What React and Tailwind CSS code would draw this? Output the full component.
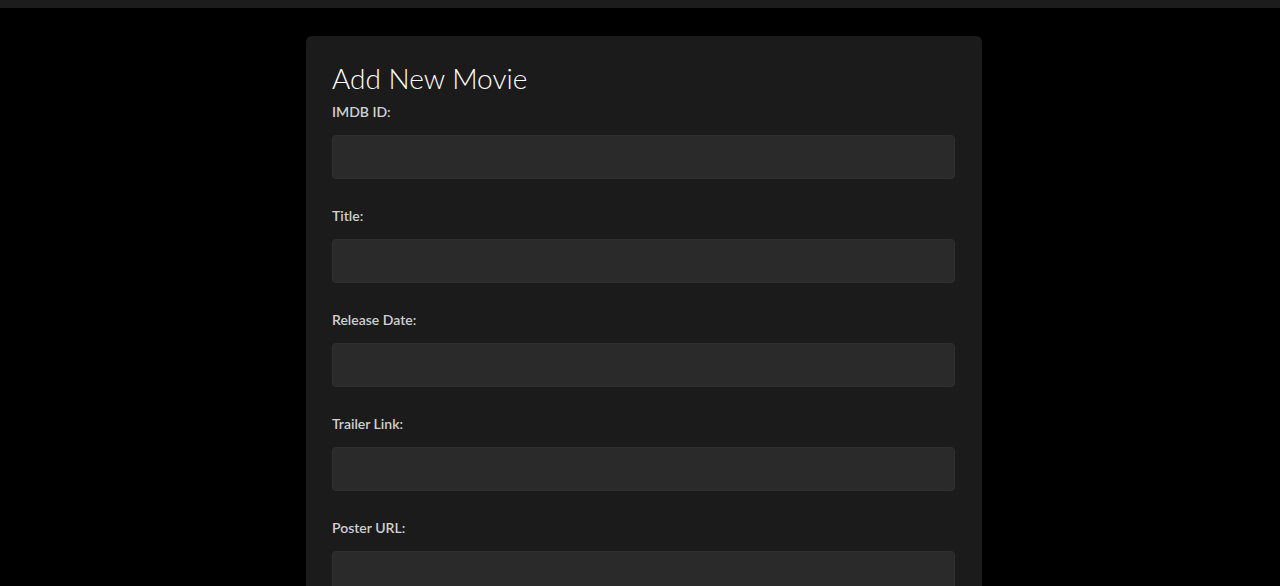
import React from "react";

const fields = ["IMDB ID:", "Title:", "Release Date:", "Trailer Link:", "Poster URL:"];

const App = () => {
  return (
    <div className="min-h-screen bg-black" style={{ fontFamily: "Lato, 'Noto Sans', sans-serif" }}>
      <div className="h-2 bg-[#1c1c1c]" />

      <div className="flex justify-center pt-7 pl-2">
        <form className="w-[676px] bg-[#1b1b1b] rounded-md pl-[26px] pr-[27px] pt-6 pb-6">
          <h2 className="text-[28px] leading-9 font-light text-white mb-1.5">Add New Movie</h2>

          {fields.map((f) => (
            <div key={f} className="mb-[27px]">
              <label className="block text-sm leading-5 font-semibold text-[#d0d0d0] mb-[13px]">{f}</label>
              <input
                type="text"
                className="block w-full h-11 rounded bg-[#2a2a2a] border border-[#303030] text-white px-3 outline-none"
              />
            </div>
          ))}
        </form>
      </div>
    </div>
  );
};

export default App;
